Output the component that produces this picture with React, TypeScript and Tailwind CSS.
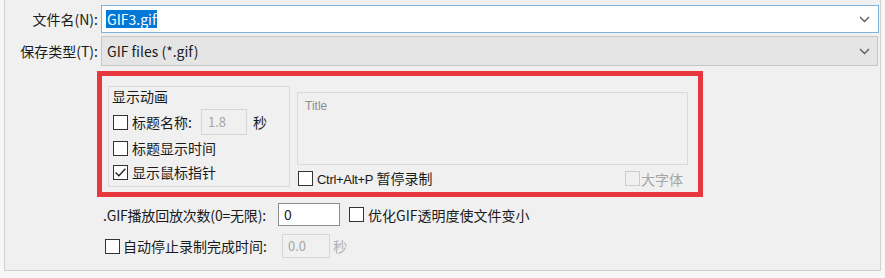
import React from "react";

function Chevron() {
  return (
    <svg width="11" height="7" viewBox="0 0 11 7" className="shrink-0">
      <path d="M1 1 L5.5 5.5 L10 1" fill="none" stroke="#5a5a5a" strokeWidth="1.3" />
    </svg>
  );
}

function Cb({ checked = false, disabled = false }: { checked?: boolean; disabled?: boolean }) {
  return (
    <span
      className={
        disabled
          ? "w-[15px] h-[15px] shrink-0 border border-[#cccccc] bg-[#f0f0f0] flex items-center justify-center"
          : "w-[15px] h-[15px] shrink-0 border border-[#333333] bg-white flex items-center justify-center"
      }
    >
      {checked && (
        <svg width="13" height="13" viewBox="0 0 12 12">
          <path d="M1.5 6 L4.5 9 L10.5 2.5" fill="none" stroke="#222" strokeWidth="1.2" />
        </svg>
      )}
    </span>
  );
}

export default function App() {
  return (
    <div className="w-[885px] h-[278px] bg-[#f7f7f7] font-['Noto_Sans_CJK_SC','Noto_Sans',sans-serif] text-[14px] text-[#1a1a1a] overflow-hidden">
      <div className="ml-[4px] w-[877px] h-[271px] border-x border-b border-[#cfcfcf] bg-[#f0f0f0] flex flex-col">
        {/* Row 1 */}
        <div className="flex items-center mt-[5px]">
          <div className="w-[93px] text-right leading-[16px] whitespace-nowrap">文件名(N):</div>
          <div className="ml-[3px] w-[778px] h-[28px] border border-[#7db3dd] bg-white flex items-center pl-[4px] pr-[8px]">
            <span className="bg-[#0078d7] text-white leading-[18px] px-[1px]">GIF3.gif</span>
            <span className="flex-1" />
            <Chevron />
          </div>
        </div>
        {/* Row 2 */}
        <div className="flex items-center mt-[3px]">
          <div className="w-[93px] text-right leading-[16px] whitespace-nowrap">保存类型(T):</div>
          <div className="ml-[3px] w-[777px] h-[30px] border border-[#c6c6c6] bg-[#e5e5e5] flex items-center pl-[5px] pr-[7px]">
            <span className="leading-[18px]">GIF files (*.gif)</span>
            <span className="flex-1" />
            <Chevron />
          </div>
        </div>

        {/* Red highlight box */}
        <div className="mt-[5px] ml-[92px] w-[606px] h-[126px] border-[5px] border-[#e8383d] flex">
          {/* Group box */}
          <div className="ml-[6px] mt-[10px] w-[182px] h-[101px] border border-[#dadada] flex flex-col pl-[3px]">
            <div className="mt-[1px] leading-[16px]">显示动画</div>
            <div className="mt-[5px] h-[26px] flex items-center pl-[1px]">
              <Cb />
              <span className="ml-[4px] w-[64px] leading-[16px] whitespace-nowrap">标题名称:</span>
              <div className="ml-[5px] w-[46px] h-[26px] border border-[#d6d6d6] bg-[#f0f0f0] flex items-center pl-[6px] text-[#a6a6a6] text-[13px]">
                1.8
              </div>
              <span className="ml-[6px] leading-[16px]">秒</span>
            </div>
            <div className="mt-[4px] h-[18px] flex items-center pl-[1px]">
              <Cb />
              <span className="ml-[4px] leading-[16px] whitespace-nowrap">标题显示时间</span>
            </div>
            <div className="mt-[6px] h-[18px] flex items-center pl-[1px]">
              <Cb checked />
              <span className="ml-[4px] leading-[16px] whitespace-nowrap">显示鼠标指针</span>
            </div>
          </div>

          {/* Right column */}
          <div className="ml-[7px] mt-[16px] w-[391px] flex flex-col">
            <div className="h-[73px] border border-[#dadada] pl-[7px] pt-[1px]">
              <span className="text-[12px] leading-[16px] text-[#8f8f8f] font-['Liberation_Sans',sans-serif]">Title</span>
            </div>
            <div className="mt-[5px] h-[17px] flex items-center pl-[1px] pr-[5px]">
              <Cb />
              <span className="ml-[4px] leading-[16px] whitespace-nowrap">
                <span className="text-[13px] font-['Liberation_Sans',sans-serif] tracking-[-0.3px]">Ctrl+Alt+P</span> 暂停录制
              </span>
              <span className="flex-1" />
              <Cb disabled />
              <span className="ml-[1px] leading-[16px] text-[#a6a6a6] whitespace-nowrap">大字体</span>
            </div>
          </div>
        </div>

        {/* GIF loop row */}
        <div className="mt-[6px] ml-[98px] flex items-center">
          <span className="w-[172px] leading-[16px] whitespace-nowrap tracking-[-0.2px]">.GIF播放回放次数(0=无限):</span>
          <div className="ml-[3px] w-[62px] h-[23px] border border-[#8c8c8c] bg-white flex items-center pl-[5px] text-[14px]">
            0
          </div>
          <span className="ml-[9px]"><Cb /></span>
          <span className="ml-[4px] leading-[16px] whitespace-nowrap">优化GIF透明度使文件变小</span>
        </div>

        {/* Auto stop row */}
        <div className="mt-[8px] ml-[100px] flex items-center">
          <Cb />
          <span className="ml-[3px] w-[159px] leading-[16px] whitespace-nowrap">自动停止录制完成时间:</span>
          <div className="ml-[0px] w-[48px] h-[24px] border border-[#d6d6d6] bg-[#f0f0f0] flex items-center pl-[5px] text-[#a6a6a6] text-[13px]">
            0.0
          </div>
          <span className="ml-[3px] leading-[16px] text-[#b0b0b0]">秒</span>
        </div>
      </div>
    </div>
  );
}
